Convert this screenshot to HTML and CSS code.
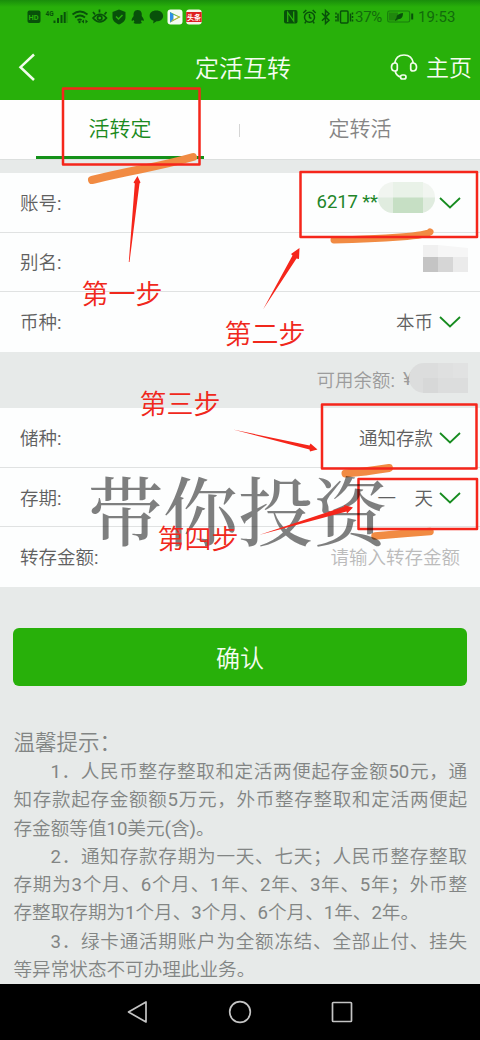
FILE: index.html
```html
<!DOCTYPE html>
<html lang="zh-CN">
<head>
<meta charset="utf-8">
<title>定活互转</title>
<link rel="stylesheet" href="styles.css">
</head>
<body>
<div class="phone">
  <header class="header">
    <div class="status">
      <svg class="status-icons" width="176" height="20" viewBox="0 0 176 20">
        <rect x="0.500" y="3.500" width="13" height="12.500" rx="2" fill="#08510a"/>
        <text x="1.500" y="13" class="hd">HD</text>
        <text x="18.500" y="8.500" class="g4">4G</text>
        <g stroke="#08510a" stroke-width="2"><path d="M27.500 16v-2.500M31 16v-5M34.500 16v-8M37.700 16v-11"/><path d="M40 16V4" stroke-width="1" opacity=".4"/></g>
        <g fill="none" stroke="#08510a" stroke-width="1.700"><path d="M45.500 7.500q7.500-6 15 0M48 10.500q5-4 10 0M50.500 13.300q2.500-2 4 0"/></g>
        <circle cx="52.500" cy="15" r="1.200" fill="#08510a"/><path d="M54.500 14.500l2.500-2v4zM61 14.500l-2.500-2v4z" fill="#08510a"/>
        <g fill="none" stroke="#08510a" stroke-width="1.700"><path d="M66 11q7-7.500 13.500 0-6.500 8-13.500 0zM66 5l2 2.500M72.500 2.500v3M79.500 5l-2 2.500"/><circle cx="72.700" cy="11" r="2.200"/></g>
        <path d="M92 2.500l6.500 2.500v5c0 4-3 6-6.500 7.500-3.500-1.500-6.500-3.500-6.500-7.500V5z" fill="#08510a"/><path d="M89 9.500l2.500 2.500 4-4" fill="none" stroke="#28b00a" stroke-width="1.500"/>
        <path d="M110.700 3c3.500 0 4.500 3 4 6 2 2.500 2.700 4.500 1.700 5l-1.700-1-.7 1.800 1 1.200-2.300.8h-4l-2.300-.8 1-1.200-.7-1.800-1.700 1c-1-.5-.3-2.500 1.700-5-.5-3 .5-6 4-6z" fill="#08510a"/>
        <path d="M129.300 3.500c4 0 6.800 2.200 6.800 5.500s-2.800 5.300-6.500 5.300l-3.500 2.200.5-2.800c-2.500-.8-4-2.500-4-4.700 0-3.300 2.800-5.500 6.700-5.500z" fill="#08510a"/>
        <rect x="140.500" y="2.500" width="15" height="15" rx="3" fill="#f4fbf2"/><path d="M143 5l10.500 5-10.500 5.500z" fill="#5fbb46"/><path d="M143 5l3.500 2.500v6L143 15.500z" fill="#2c8fe8"/><path d="M143 15.500l10.500-5.500-4-1.500z" fill="#b9b83c"/><path d="M146.500 7.800l4.500 2.200-4.500 2.600z" fill="#fff"/>
        <rect x="159.200" y="2.500" width="15.500" height="15" rx="3" fill="#f7f4ec"/><rect x="159.200" y="5" width="15.500" height="10" fill="#de1f20"/><text x="160" y="12.700" class="news">头条</text>
      </svg>
      <div class="status-right">
        <svg width="70" height="20" viewBox="0 0 70 20" fill="none" stroke="#08510a" stroke-width="1.500">
          <rect x="0" y="3" width="13.500" height="13.500" rx="2" fill="#08510a" stroke="none"/>
          <path d="M3.700 15V5.500l6 8.500V4.500" stroke="#28b00a" stroke-width="1.300"/>
          <circle cx="25.500" cy="10.300" r="5"/><path d="M25.500 7v3.500l2 1M19.300 6l3-3M31.700 6l-3-3M22 14.500l-1.200 1.800M29 14.500l1.200 1.800"/>
          <path d="M38 6.300l7 7-3.500 3.200V3.500l3.500 3.200-7 7"/>
          <rect x="56.500" y="4" width="7.500" height="12" rx="1"/><path d="M54 6.500v8M66.500 6.500v8"/><path d="M52 5.500v9M68.500 5.500v9" stroke-dasharray="2 1.500"/>
        </svg>
        <span class="pct">37%</span>
        <svg class="battery" width="27" height="20" viewBox="0 0 27 20"><rect x=".7" y="4" width="22" height="11" rx="1.800" fill="none" stroke="#187d0d" stroke-width="1.200"/><rect x="2" y="5.500" width="9" height="8" fill="#20870d"/><path d="M8 13l1.500-2c0-3.500 3-4.500 6.500-5 0 4-1.500 6.500-5.500 6.200L8.500 14z" fill="#08510a"/><path d="M25.200 6.500v6" stroke="#08510a" stroke-width="2"/></svg>
        <span class="time">19:53</span>
      </div>
    </div>
    <div class="titlebar">
      <svg class="back" width="22" height="32" viewBox="0 0 22 32"><path d="M18 3.500L4.500 16.200 18 29" fill="none" stroke="#f2fdec" stroke-width="2.500"/></svg>
      <h1 class="title">定活互转</h1>
      <div class="home">
        <svg width="28" height="28" viewBox="0 0 28 28" fill="none" stroke="#f2fdec" stroke-width="1.700"><path d="M4.500 10.500C5.500 4.500 9 2 14 2s8.500 2.500 9.500 8.500M4.500 10C2.300 10.300 1.500 11.700 1.500 14s1 4 3.500 4c1.700 0 2.300-.8 2.300-2v-4c0-1.500-1.100-2.200-2.800-2zM23.500 10c2.200.3 3 1.700 3 4s-1 4-3.500 4c-1.700 0-2.300-.8-2.300-2v-4c0-1.500 1.100-2.200 2.800-2zM5 18c1 3.500 3 5.500 6 6"/><rect x="10.500" y="22" width="5.500" height="4" rx="2"/></svg>
        <span>主页</span>
      </div>
    </div>
  </header>

  <nav class="tabs">
    <div class="tab active"><span>活转定</span></div>
    <div class="tab"><span>定转活</span></div>
  </nav>

  <section class="form top">
    <div class="row"><label>账号:</label><div class="value account"><span>6217 **</span>
      <svg class="mask" width="57" height="31" viewBox="0 0 57 31"><rect width="57" height="31" rx="15.500" fill="#f1f5f0"/><path d="M0 15.500h57a15.500 15.500 0 0 1-15.500 15.500h-26A15.500 15.500 0 0 1 0 15.500z" fill="#e0ecdf"/><path d="M15 0h30v15.500H15z" fill="#e9f2e8"/><path d="M15 15.500h30V31H15z" fill="#c6dfc4"/></svg>
      <svg class="chev" width="22" height="14" viewBox="0 0 22 14"><path d="M1 2l10 9.500L21 2"/></svg></div></div>
    <div class="row"><label>别名:</label><svg class="mosaic" width="45" height="27" viewBox="0 0 45 27"><path d="M0 0h15v12H0z" fill="#f0f0f0"/><path d="M15 0l30 3v9H15z" fill="#f6f6f6"/><path d="M0 12h15v15H0z" fill="#c4c4c4"/><path d="M15 12h15v15H15z" fill="#d6d6d6"/><path d="M30 12h15v15H30z" fill="#ebebeb"/></svg></div>
    <div class="row"><label>币种:</label><div class="value"><span>本币</span><svg class="chev" width="22" height="14" viewBox="0 0 22 14"><path d="M1 2l10 9.500L21 2"/></svg></div></div>
  </section>

  <div class="balance"><span>可用余额:</span><span class="yen">¥</span>
    <svg width="59" height="30" viewBox="0 0 59 30"><path d="M15 0h44v30H15A15 15 0 0 1 15 0z" fill="#dcdddd"/><path d="M29 0h15v15H29z" fill="#dfe0e0"/><path d="M44 0h15v15H44z" fill="#e1e2e2"/><path d="M14 15h15v15H14z" fill="#d7d8d8"/></svg>
  </div>

  <section class="form">
    <div class="row"><label>储种:</label><div class="value"><span>通知存款</span><svg class="chev" width="22" height="14" viewBox="0 0 22 14"><path d="M1 2l10 9.500L21 2"/></svg></div></div>
    <div class="row"><label>存期:</label><div class="value"><span>一　天</span><svg class="chev" width="22" height="14" viewBox="0 0 22 14"><path d="M1 2l10 9.500L21 2"/></svg></div></div>
    <div class="row"><label>转存金额:</label><span class="placeholder">请输入转存金额</span></div>
  </section>

  <button class="confirm">确认</button>

  <section class="tips">
    <h2>温馨提示：</h2>
    <p class="line first">1．人民币整存整取和定活两便起存金额50元，通</p>
    <p class="line">知存款起存金额额5万元，外币整存整取和定活两便起</p>
    <p class="line last">存金额等值10美元(含)。</p>
    <p class="line first">2．通知存款存期为一天、七天；人民币整存整取</p>
    <p class="line">存期为3个月、6个月、1年、2年、3年、5年；外币整</p>
    <p class="line last">存整取存期为1个月、3个月、6个月、1年、2年。</p>
    <p class="line first">3．绿卡通活期账户为全额冻结、全部止付、挂失</p>
    <p class="line last">等异常状态不可办理此业务。</p>
  </section>

  <footer class="navbar">
    <svg width="24" height="24" viewBox="0 0 24 24"><path d="M20 2v20L2.500 12z"/></svg>
    <svg width="24" height="24" viewBox="0 0 24 24"><circle cx="12" cy="12" r="10.300"/></svg>
    <svg width="24" height="24" viewBox="0 0 24 24"><rect x="2.500" y="2.500" width="19" height="19" rx=".8"/></svg>
  </footer>

  <svg class="notes" width="480" height="1040" viewBox="0 0 480 1040">
    <g class="brush">
      <path d="M92 180Q112 175 142 169T193 157" stroke-width="8"/>
      <path d="M334 240Q372 239 400 237T430 232" stroke-width="7"/>
      <path d="M345.500 473.500Q364 472 389 468" stroke-width="8"/>
      <path d="M375 536Q403 533.500 430 531.500" stroke-width="7.500"/>
    </g>
    <g class="boxes">
      <rect x="63" y="88.500" width="136.500" height="76"/>
      <rect x="300.500" y="172" width="176.500" height="65"/>
      <rect x="322" y="404.500" width="154.500" height="64"/>
      <rect x="358.500" y="479" width="118.500" height="50"/>
    </g>
    <g class="arrows">
      <path d="M128.800 262L134.800 183.500 133.500 182.500 137.500 176 140.500 182.500 139.500 183.500 129.500 262z"/>
      <path d="M263 309.500L292.500 255.500 291 254 299.500 248 299 259 296.500 258.500z"/>
      <path d="M233 429.500L309.500 445.500 310.500 443.500 317.500 449.500 310 451.500 309.500 449.500z"/>
    </g>
    <text x="88" y="540" class="watermark">带你投资</text>
    <g class="arrows"><path d="M259 535L344.500 506.500 344 505 353 507.500 347 513.500 346.500 511.500z"/></g>
    <g class="steps">
      <text x="81.500" y="303.500">第一步</text>
      <text x="224.500" y="343.500">第二步</text>
      <text x="139.500" y="414">第三步</text>
      <text x="157.500" y="549">第四步</text>
    </g>
  </svg>
</div>
</body>
</html>
```

FILE: styles.css
```css
* { box-sizing: border-box; }
body { margin: 0; font-family: Roboto, "Noto Sans CJK SC DemiLight", "Noto Sans CJK SC", sans-serif; font-weight: 400; }
h1, h2, p { margin: 0; font-weight: inherit; }
.phone { position: relative; width: 480px; height: 1040px; display: flex; flex-direction: column; background: #e7eae9; overflow: hidden; }
.header { height: 100px; background: linear-gradient(#198d0b, #28b00a 7px); }
.status { height: 34px; padding: 7px 25px 0 27px; display: flex; justify-content: space-between; color: #126b0c; }
.status-right { display: flex; height: 20px; align-items: center; font-size: 15px; }
.pct { margin-left: 1px; width: 32px; letter-spacing: -.3px; }
.time { margin-left: 4px; width: 37px; }
.hd { font: 700 7.5px Roboto, sans-serif; fill: #28b00a; }
.g4 { font: 700 6.5px Roboto, sans-serif; fill: #08510a; }
.news { font: 700 7px "Noto Sans CJK SC", sans-serif; fill: #fff; }
.titlebar { height: 66px; display: grid; grid-template-columns: 110px 1fr 110px; align-items: center; color: #f5fdf1; padding: 0 8px 0 16px; font-weight: 350; }
.back { margin-top: 0; }
.title { text-align: center; font-size: 24px; margin: -2px 2px 0 0; }
.home { display: flex; align-items: center; justify-content: flex-end; gap: 8px; font-size: 23px; }
.home span { margin-top: -2px; }
.tabs { height: 60px; position: relative; display: grid; grid-template-columns: 1fr 1fr; background: #fefefe; border-bottom: 1px solid #dcdfde; font-weight: 350; }
.tabs::before { content: ""; position: absolute; left: 239px; top: 24px; width: 1px; height: 13px; background: #d5d5d5; }
.tab { display: flex; align-items: center; justify-content: center; font-size: 21px; color: #858585; padding-bottom: 4px; }
.tab.active { color: #1b8a21; margin: 0 36px; border-bottom: 3px solid #149119; padding: 0 0 1px; }
.form { background: #fdfefe; }
.form.top { margin-top: 13px; }
.row { height: 59.7px; padding: 0 12px 0 20px; display: flex; align-items: center; justify-content: space-between; font-size: 18.5px; color: #606060; border-bottom: 1px solid #e0e2e2; }
.row label, .row span { position: relative; top: -.5px; }
.row:last-child { border-bottom-color: transparent; }
.value { display: flex; align-items: center; padding-right: 7px; }
.chev { margin-left: 6px; margin-top: 1px; fill: none; stroke: #178c20; stroke-width: 1.800; }
.account { color: #218529; font-size: 18.5px; }
.account span { letter-spacing: -.1px; top: 0; }
.mask { margin: -10px 0 0 0; }
.account .chev { margin-left: 4px; }
.placeholder { color: #bbb; padding-right: 8px; }
.mosaic { align-self: flex-start; margin-top: 12px; }
.balance { height: 56px; display: flex; align-items: center; justify-content: flex-end; padding-right: 12px; font-size: 18.5px; color: #9c9c9c; }
.balance span { margin-top: -2px; }
.yen { margin-left: 8px; width: 6px; }
.balance svg { margin-top: -4px; position: relative; }
.confirm { margin: 41px 13px 0; height: 58px; flex: none; border: 0; border-radius: 6px; background: #28b00a; color: #f5fdf1; font: 350 24px "Noto Sans CJK SC DemiLight", "Noto Sans CJK SC", sans-serif; padding: 0 0 2px; }
.tips { padding: 41px 13px 0 13.500px; color: #828584; }
.tips h2 { font-size: 21.5px; height: 31px; line-height: 31px; }
.line { font-size: 18.6px; height: 28.25px; line-height: 28.25px; white-space: nowrap; text-align: justify; text-align-last: justify; }
.line.first { padding-left: 37px; }
.line.last { text-align-last: left; }
.navbar { margin-top: auto; height: 56px; background: #000; display: flex; align-items: center; justify-content: center; gap: 78px; }
.navbar svg { fill: none; stroke: #c4c4c4; stroke-width: 1.700; stroke-linejoin: round; }
.notes { position: absolute; inset: 0; pointer-events: none; }
.brush { fill: none; stroke: #f18b43; stroke-linecap: round; }
.boxes { fill: none; stroke: #f5261b; stroke-width: 2.500; stroke-linejoin: round; }
.arrows { fill: #f5261b; }
.steps { fill: #f0281c; font: 350 27px "Noto Sans CJK SC DemiLight", "Noto Sans CJK SC", sans-serif; }
.watermark { font: 500 75px "Noto Serif CJK SC", "Source Han Serif SC", "SimSun", "Noto Sans CJK SC", serif; fill: #000; fill-opacity: .5; }
```
